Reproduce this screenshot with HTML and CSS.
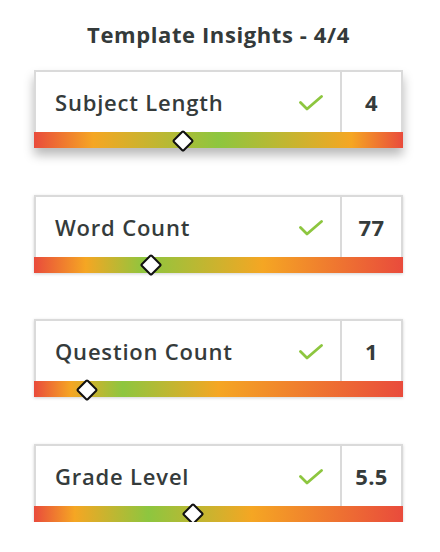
FILE: index.html
```html
<!DOCTYPE html>
<html lang="en">
<head>
<meta charset="utf-8">
<title>Template Insights</title>
<link rel="stylesheet" href="styles.css">
</head>
<body>
<div class="panel">
  <h1 class="title">Template Insights - 4/4</h1>

  <div class="card lifted">
    <div class="card-head">
      <span class="label">Subject Length</span>
      <svg class="check" viewBox="0 0 24 16" width="24" height="16"><polyline points="1.5,7.5 8,14 22.5,1.5"/></svg>
      <span class="value">4</span>
    </div>
    <div class="meter" style="background: linear-gradient(90deg, #e94b3c 0%, #f5a623 16%, #8dc63f 50%, #f5a623 86%, #e94b3c 100%);">
      <span class="marker" style="left: 40.4%;"></span>
    </div>
  </div>

  <div class="card">
    <div class="card-head">
      <span class="label">Word Count</span>
      <svg class="check" viewBox="0 0 24 16" width="24" height="16"><polyline points="1.5,7.5 8,14 22.5,1.5"/></svg>
      <span class="value">77</span>
    </div>
    <div class="meter" style="background: linear-gradient(90deg, #e94b3c 0%, #f5a623 14%, #8dc63f 30%, #f5a623 62%, #e94b3c 100%);">
      <span class="marker" style="left: 31.7%;"></span>
    </div>
  </div>

  <div class="card">
    <div class="card-head">
      <span class="label">Question Count</span>
      <svg class="check" viewBox="0 0 24 16" width="24" height="16"><polyline points="1.5,7.5 8,14 22.5,1.5"/></svg>
      <span class="value">1</span>
    </div>
    <div class="meter" style="background: linear-gradient(90deg, #e94b3c 0%, #f5a623 10%, #8dc63f 24%, #f5a623 50%, #e94b3c 100%);">
      <span class="marker" style="left: 14.4%;"></span>
    </div>
  </div>

  <div class="card">
    <div class="card-head">
      <span class="label">Grade Level</span>
      <svg class="check" viewBox="0 0 24 16" width="24" height="16"><polyline points="1.5,7.5 8,14 22.5,1.5"/></svg>
      <span class="value">5.5</span>
    </div>
    <div class="meter" style="background: linear-gradient(90deg, #e94b3c 0%, #f5a623 11%, #8dc63f 31%, #f5a623 59%, #e94b3c 100%);">
      <span class="marker" style="left: 43.1%;"></span>
    </div>
  </div>
</div>
</body>
</html>
```

FILE: styles.css
```css
* { box-sizing: border-box; }

html, body {
  margin: 0;
  padding: 0;
  background: #ffffff;
}

body {
  font-family: "Open Sans", "Liberation Sans", sans-serif;
  color: #353b3b;
}

.panel {
  width: 369px;
  margin-left: 34px;
  padding-top: 21.5px;
  display: flex;
  flex-direction: column;
  gap: 46.5px;
}

.title {
  margin: 0 0 -22px 0;
  font-size: 22px;
  line-height: 24px;
  font-weight: 700;
  letter-spacing: 0.6px;
  text-align: center;
  color: #343a3a;
}

.card {
  background: #ffffff;
  box-shadow: 0 1px 3px rgba(0, 0, 0, 0.18);
}

.card.lifted {
  box-shadow: 0 7px 10px rgba(0, 0, 0, 0.28);
}

.card-head {
  height: 62px;
  display: flex;
  align-items: center;
  border: 2px solid #dadada;
  border-bottom: none;
}

.label {
  flex: 1;
  padding-left: 19px;
  font-size: 22px;
  font-weight: 600;
  letter-spacing: 0.8px;
  color: #353b3b;
}

.check {
  margin-right: 17px;
  margin-top: 2px;
}

.check polyline {
  fill: none;
  stroke: #8dc63f;
  stroke-width: 2.8;
  stroke-linecap: round;
  stroke-linejoin: round;
}

.value {
  align-self: stretch;
  width: 61px;
  border-left: 2px solid #dadada;
  display: flex;
  align-items: center;
  justify-content: center;
  font-size: 22px;
  font-weight: 700;
  letter-spacing: 0.3px;
  color: #353b3b;
}

.meter {
  position: relative;
  height: 16px;
}

.marker {
  position: absolute;
  top: 50%;
  width: 16px;
  height: 16px;
  margin-left: -8px;
  margin-top: -7.5px;
  background: #ffffff;
  border: 2px solid #111111;
  border-radius: 2px;
  transform: rotate(45deg);
}
```
